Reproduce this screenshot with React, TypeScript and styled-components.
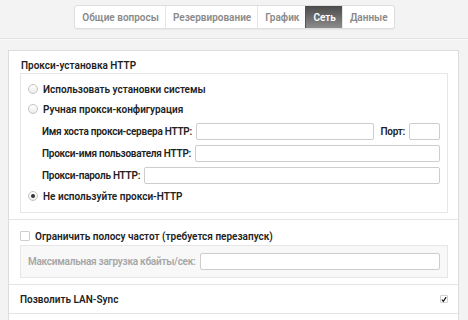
import React, { useState } from 'react';
import styled, { createGlobalStyle, css } from 'styled-components';

const GlobalStyle = createGlobalStyle`
  html, body {
    margin: 0;
    padding: 0;
    background: #f3f3f3;
  }
  body {
    font-family: Roboto, "Open Sans", sans-serif;
    color: #2b2b2b;
  }
`;

const Page = styled.div`
  width: 468px;
  height: 320px;
  overflow: hidden;
`;

const Toolbar = styled.div`
  height: 39px;
  box-sizing: border-box;
  display: flex;
  justify-content: center;
  align-items: flex-start;
  padding-top: 5px;
  border-bottom: 1px solid #e2e2e2;
  box-shadow: 0 1px 0 #fafafa;
`;

const TabGroup = styled.div`
  display: flex;
  height: 22px;
  background: #fff;
  border: 1px solid #dedede;
  border-radius: 3px;
  box-shadow: 0 1px 1px rgba(0, 0, 0, 0.04);
  overflow: hidden;
  margin-left: 1px;
`;

const Tab = styled.div<{ $active?: boolean }>`
  display: flex;
  align-items: center;
  padding: 0 6px 0 7px;
  font-size: 10px;
  font-weight: 600;
  color: #8a8a8a;
  & + & {
    border-left: 1px solid #e6e6e6;
  }
  ${(p) =>
    p.$active &&
    css`
      color: #fff;
      background: linear-gradient(#4b4b4b, #8c8c8c);
      border-left-color: #555 !important;
    `}
`;

const Content = styled.div`
  padding: 11px 9px 0 8px;
`;

const Panel = styled.div`
  background: #fff;
  border: 1px solid #dcdcdc;
  border-bottom: none;
  height: 300px;
`;

const Section = styled.div<{ $pad?: string }>`
  padding: ${(p) => p.$pad || '0 10px 0 11px'};
  border-bottom: 1px solid #e4e4e4;
`;

const Heading = styled.div`
  height: 22px;
  padding-top: 6px;
  box-sizing: border-box;
  display: flex;
  align-items: center;
  font-size: 10px;
  font-weight: 600;
  color: #1f1f1f;
  padding-left: 1px;
`;

const Box = styled.div<{ $muted?: boolean }>`
  border: 1px solid #e6e6e6;
  padding: 5px 7px 6px 7px;
  background: ${(p) => (p.$muted ? '#f8f8f8' : '#fff')};
`;

const RadioRow = styled.label`
  display: flex;
  align-items: center;
  gap: 5px;
  height: 20px;
  font-size: 10px;
  font-weight: 600;
  color: #222;
`;

const Radio = styled.span<{ $checked?: boolean }>`
  width: 10px;
  height: 10px;
  box-sizing: border-box;
  border-radius: 50%;
  border: 1px solid #c4c4c4;
  background: linear-gradient(#fff, #ececec);
  display: flex;
  align-items: center;
  justify-content: center;
  flex: none;
  &::after {
    content: '';
    display: ${(p) => (p.$checked ? 'block' : 'none')};
    width: 4px;
    height: 4px;
    border-radius: 50%;
    background: #333;
  }
`;

const Fields = styled.div`
  margin-top: 1px;
  padding-left: 14px;
`;

const FieldRow = styled.div<{ $h?: number }>`
  display: flex;
  align-items: center;
  height: ${(p) => p.$h || 22}px;
  gap: 4px;
`;

const FieldLabel = styled.span<{ $muted?: boolean }>`
  font-size: 10px;
  font-weight: 600;
  letter-spacing: -0.25px;
  white-space: nowrap;
  color: ${(p) => (p.$muted ? '#a6a6a6' : '#222')};
`;

const Input = styled.input<{ $w?: number }>`
  box-sizing: border-box;
  height: 17px;
  border: 1px solid #cdcdcd;
  border-radius: 2px;
  background: #fff;
  padding: 0 3px;
  font: inherit;
  font-size: 10px;
  outline: none;
  ${(p) =>
    p.$w
      ? css`
          width: ${p.$w}px;
          flex: none;
        `
      : css`
          flex: 1;
          min-width: 0;
        `}
`;

const PortLabel = styled(FieldLabel)`
  margin-left: 2px;
`;

const CheckRow = styled.label`
  display: flex;
  align-items: center;
  gap: 5px;
  height: 18px;
  font-size: 10px;
  font-weight: 600;
  color: #222;
`;

const Check = styled.span<{ $size?: number }>`
  width: ${(p) => p.$size || 10}px;
  height: ${(p) => p.$size || 10}px;
  box-sizing: border-box;
  border: 1px solid #cfcfcf;
  border-radius: 1px;
  background: #fff;
  display: flex;
  align-items: center;
  justify-content: center;
  flex: none;
`;

const MutedBox = styled(Box)`
  padding: 7px 7px 7px 7px;
`;

const LanRow = styled.div`
  display: flex;
  align-items: center;
  justify-content: space-between;
  height: 28px;
  font-size: 10px;
  font-weight: 600;
  color: #222;
`;

const tabs = ['Общие вопросы', 'Резервирование', 'График', 'Сеть', 'Данные'];

export default function App() {
  const [proxy, setProxy] = useState('none');

  return (
    <Page>
      <GlobalStyle />
      <Toolbar>
        <TabGroup>
          {tabs.map((t) => (
            <Tab key={t} $active={t === 'Сеть'}>
              {t}
            </Tab>
          ))}
        </TabGroup>
      </Toolbar>
      <Content>
        <Panel>
          <Section $pad="0 10px 6px 11px">
            <Heading>Прокси-установка HTTP</Heading>
            <Box>
              <RadioRow onClick={() => setProxy('system')}>
                <Radio $checked={proxy === 'system'} />
                Использовать установки системы
              </RadioRow>
              <RadioRow onClick={() => setProxy('manual')}>
                <Radio $checked={proxy === 'manual'} />
                Ручная прокси-конфигурация
              </RadioRow>
              <Fields>
                <FieldRow>
                  <FieldLabel>Имя хоста прокси-сервера HTTP:</FieldLabel>
                  <Input />
                  <PortLabel>Порт:</PortLabel>
                  <Input $w={31} />
                </FieldRow>
                <FieldRow>
                  <FieldLabel>Прокси-имя пользователя HTTP:</FieldLabel>
                  <Input />
                </FieldRow>
                <FieldRow>
                  <FieldLabel>Прокси-пароль HTTP:</FieldLabel>
                  <Input type="password" />
                </FieldRow>
              </Fields>
              <RadioRow onClick={() => setProxy('none')}>
                <Radio $checked={proxy === 'none'} />
                Не используйте прокси-HTTP
              </RadioRow>
            </Box>
          </Section>
          <Section $pad="7px 10px 6px 11px">
            <CheckRow>
              <Check />
              Ограничить полосу частот (требуется перезапуск)
            </CheckRow>
            <MutedBox $muted>
              <FieldRow $h={17}>
                <FieldLabel $muted>Максимальная загрузка кбайты/сек:</FieldLabel>
                <Input disabled />
              </FieldRow>
            </MutedBox>
          </Section>
          <Section>
            <LanRow>
              Позволить LAN-Sync
              <Check $size={8}>
                <svg width="7" height="7" viewBox="0 0 7 7">
                  <path d="M1 3.6 L2.8 5.6 L6 0.8" fill="none" stroke="#111" strokeWidth="1.4" />
                </svg>
              </Check>
            </LanRow>
          </Section>
        </Panel>
      </Content>
    </Page>
  );
}
